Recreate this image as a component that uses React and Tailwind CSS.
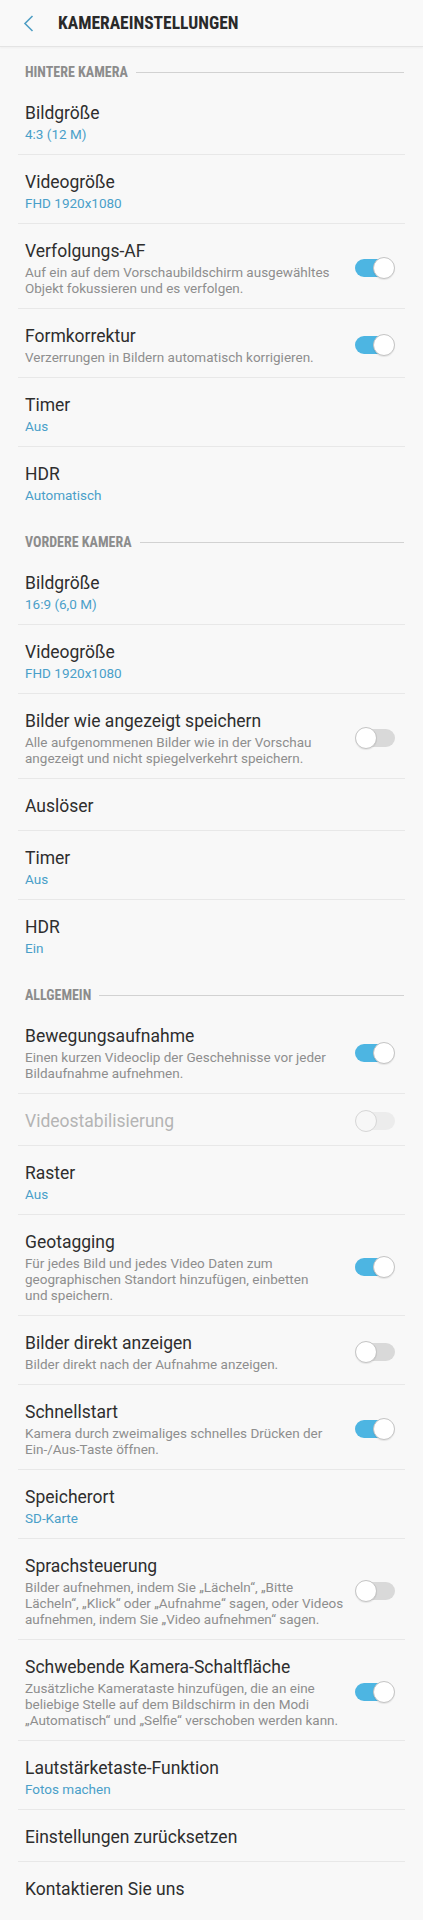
import React from 'react';

const sections = [
  {
    title: 'HINTERE KAMERA',
    rows: [
      { title: 'Bildgröße', value: '4:3 (12 M)' },
      { title: 'Videogröße', value: 'FHD 1920x1080' },
      { title: 'Verfolgungs-AF', desc: ['Auf ein auf dem Vorschaubildschirm ausgewähltes', 'Objekt fokussieren und es verfolgen.'], toggle: 'on' },
      { title: 'Formkorrektur', desc: ['Verzerrungen in Bildern automatisch korrigieren.'], toggle: 'on' },
      { title: 'Timer', value: 'Aus' },
      { title: 'HDR', value: 'Automatisch' },
    ],
  },
  {
    title: 'VORDERE KAMERA',
    rows: [
      { title: 'Bildgröße', value: '16:9 (6,0 M)' },
      { title: 'Videogröße', value: 'FHD 1920x1080' },
      { title: 'Bilder wie angezeigt speichern', desc: ['Alle aufgenommenen Bilder wie in der Vorschau', 'angezeigt und nicht spiegelverkehrt speichern.'], toggle: 'off' },
      { title: 'Auslöser' },
      { title: 'Timer', value: 'Aus' },
      { title: 'HDR', value: 'Ein' },
    ],
  },
  {
    title: 'ALLGEMEIN',
    rows: [
      { title: 'Bewegungsaufnahme', desc: ['Einen kurzen Videoclip der Geschehnisse vor jeder', 'Bildaufnahme aufnehmen.'], toggle: 'on' },
      { title: 'Videostabilisierung', toggle: 'disabled', disabled: true },
      { title: 'Raster', value: 'Aus' },
      { title: 'Geotagging', desc: ['Für jedes Bild und jedes Video Daten zum', 'geographischen Standort hinzufügen, einbetten', 'und speichern.'], toggle: 'on' },
      { title: 'Bilder direkt anzeigen', desc: ['Bilder direkt nach der Aufnahme anzeigen.'], toggle: 'off' },
      { title: 'Schnellstart', desc: ['Kamera durch zweimaliges schnelles Drücken der', 'Ein-/Aus-Taste öffnen.'], toggle: 'on' },
      { title: 'Speicherort', value: 'SD-Karte' },
      { title: 'Sprachsteuerung', desc: ['Bilder aufnehmen, indem Sie „Lächeln“, „Bitte', 'Lächeln“, „Klick“ oder „Aufnahme“ sagen, oder Videos', 'aufnehmen, indem Sie „Video aufnehmen“ sagen.'], toggle: 'off' },
      { title: 'Schwebende Kamera-Schaltfläche', desc: ['Zusätzliche Kamerataste hinzufügen, die an eine', 'beliebige Stelle auf dem Bildschirm in den Modi', '„Automatisch“ und „Selfie“ verschoben werden kann.'], toggle: 'on' },
      { title: 'Lautstärketaste-Funktion', value: 'Fotos machen' },
      { title: 'Einstellungen zurücksetzen' },
      { title: 'Kontaktieren Sie uns' },
    ],
  },
];

const Toggle = ({ state }) => {
  const on = state === 'on';
  const disabled = state === 'disabled';
  return (
    <div className="relative w-[40px] h-[22px] shrink-0">
      <div
        className={
          on
            ? 'absolute top-[2px] left-0 right-[3px] h-[18px] rounded-full bg-[#4db5e2]'
            : disabled
            ? 'absolute top-[2px] left-[3px] right-0 h-[18px] rounded-full bg-[#ececec]'
            : 'absolute top-[2px] left-[3px] right-0 h-[18px] rounded-full bg-[#d9d9d9]'
        }
      />
      <div
        className={
          (on ? 'right-0 ' : 'left-0 ') +
          (disabled
            ? 'absolute top-0 w-[22px] h-[22px] rounded-full bg-[#f7f7f7] border border-[#d6d6d6]'
            : 'absolute top-0 w-[22px] h-[22px] rounded-full bg-white border border-[#c4c4c4] shadow-[0_1px_1px_rgba(0,0,0,0.08)]')
        }
      />
    </div>
  );
};

const Row = ({ row, last }) => {
  const hasSub = row.value || row.desc;
  return (
    <div className={last ? 'mx-[18px]' : 'mx-[18px] border-b border-[#e8e8e8]'}>
      <div className={`flex items-center pl-[7px] pr-[10px] pt-4 ${hasSub ? 'pb-3' : 'pb-[13px]'}`}>
        <div className="flex-1 min-w-0 pr-[6px]">
          <div className={`text-[17.5px] leading-[22px] ${row.disabled ? 'text-[#b4b4b4]' : 'text-[#2e2e2e]'}`}>{row.title}</div>
          {row.value && <div className="mt-[2px] text-[13.5px] leading-[16px] text-[#4a9fc9]">{row.value}</div>}
          {row.desc && (
            <div className="mt-[2px] text-[13.5px] leading-[16px] text-[#8e8e8e] whitespace-nowrap">
              {row.desc.map((line, i) => (
                <div key={i}>{line}</div>
              ))}
            </div>
          )}
        </div>
        {row.toggle && <Toggle state={row.toggle} />}
      </div>
    </div>
  );
};

const SectionHeader = ({ title, first }) => (
  <div className={`flex items-center pl-[25px] pr-[19px] pb-[6px] ${first ? 'pt-[17px]' : 'pt-[19px]'}`}>
    <span className="text-[14px] leading-[16px] font-bold text-[#8c8c8c] whitespace-nowrap font-['Roboto_Condensed','Roboto',sans-serif]">
      {title}
    </span>
    <div className="flex-1 h-px bg-[#d2d2d2] ml-[8px]" />
  </div>
);

const App = () => {
  return (
    <div className="min-h-screen bg-[#f8f8f8] font-['Roboto',sans-serif]">
      <div className="h-[47px] flex items-center border-b border-[#e4e4e4] bg-[#f9f9f9] shadow-[0_1px_2px_rgba(0,0,0,0.04)]">
        <svg className="ml-[23px]" width="11" height="17" viewBox="0 0 11 17" fill="none">
          <polyline points="9.5,1 2,8.5 9.5,16" stroke="#4f9ec4" strokeWidth="1.6" />
        </svg>
        <h1 className="ml-[24px] text-[17.5px] font-bold text-[#2a2a2a] font-['Roboto_Condensed','Roboto',sans-serif]">
          KAMERAEINSTELLUNGEN
        </h1>
      </div>
      {sections.map((s, si) => (
        <div key={s.title}>
          <SectionHeader title={s.title} first={si === 0} />
          {s.rows.map((r, i) => (
            <Row key={r.title + i} row={r} last={i === s.rows.length - 1} />
          ))}
        </div>
      ))}
    </div>
  );
};

export default App;
